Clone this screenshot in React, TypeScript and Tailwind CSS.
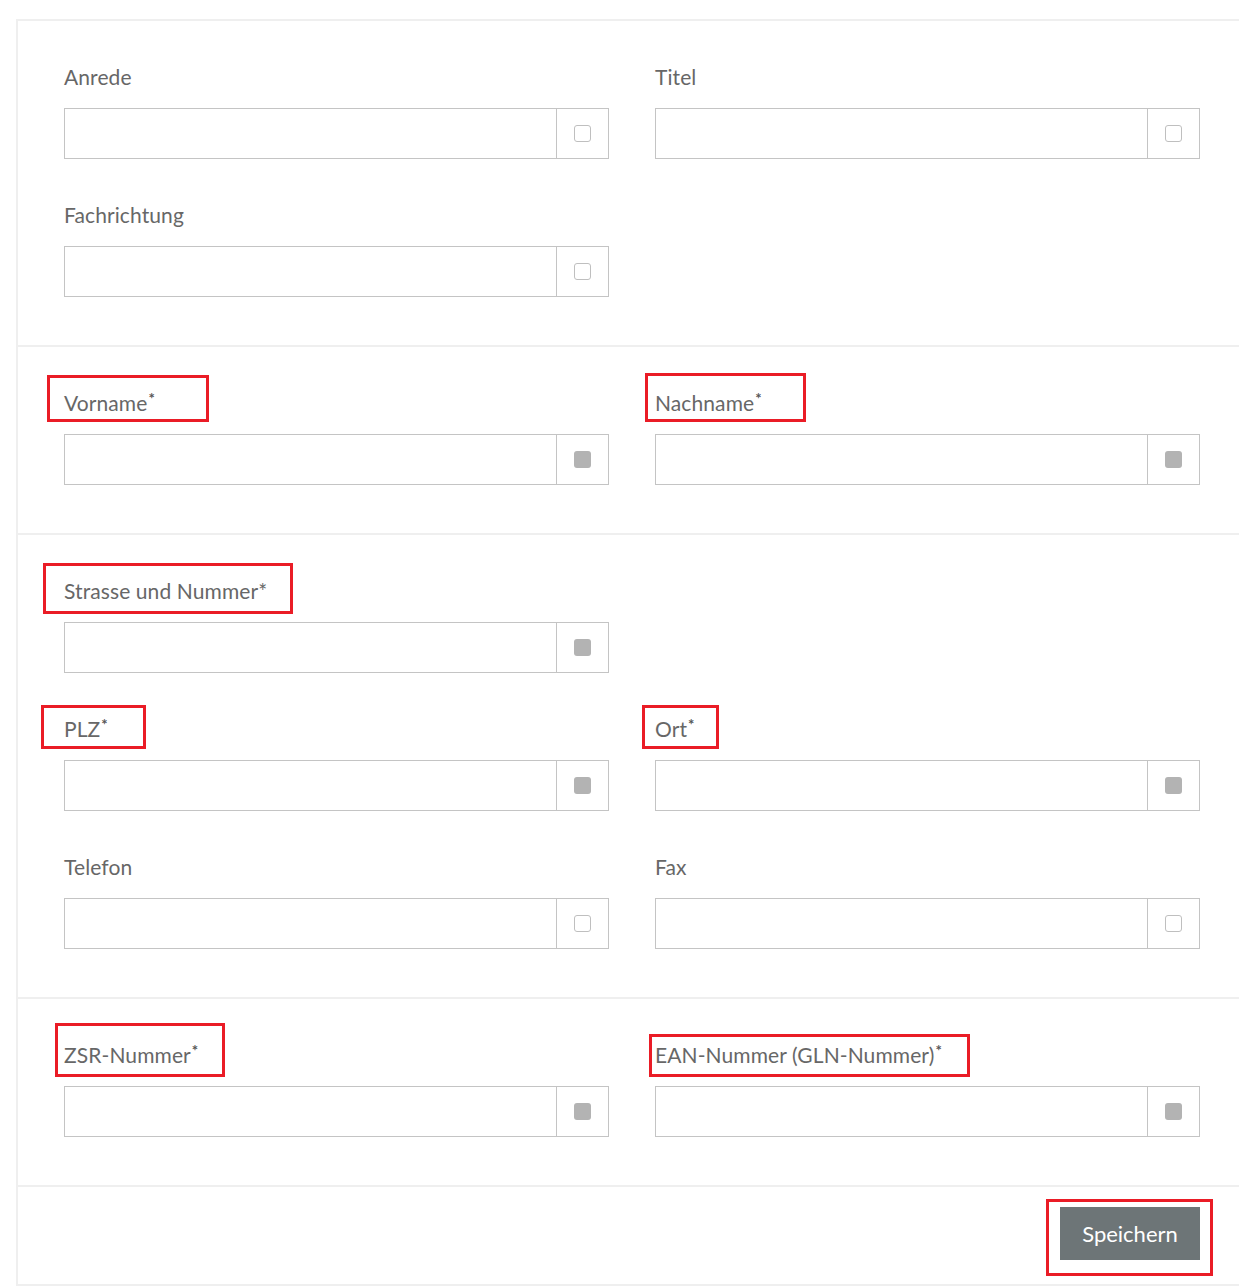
import React from "react";

type Mark = { l: number; t: number; w: number; h: number };

type Field = {
  label: string;
  star?: "sup" | "inline";
  filled?: boolean;
  mark?: Mark;
};

type Section = (Field | null)[];

const SECTIONS: Section[] = [
  [{ label: "Anrede" }, { label: "Titel" }, { label: "Fachrichtung" }, null],
  [
    { label: "Vorname", star: "sup", filled: true, mark: { l: -17, t: -14, w: 162, h: 47 } },
    { label: "Nachname", star: "sup", filled: true, mark: { l: -10, t: -16, w: 161, h: 49 } },
  ],
  [
    { label: "Strasse und Nummer", star: "inline", filled: true, mark: { l: -21, t: -14, w: 250, h: 51 } },
    null,
    { label: "PLZ", star: "sup", filled: true, mark: { l: -23, t: -10, w: 105, h: 44 } },
    { label: "Ort", star: "sup", filled: true, mark: { l: -13, t: -10, w: 77, h: 44 } },
    { label: "Telefon" },
    { label: "Fax" },
  ],
  [
    { label: "ZSR-Nummer", star: "sup", filled: true, mark: { l: -9, t: -18, w: 170, h: 54 } },
    { label: "EAN-Nummer (GLN-Nummer)", star: "sup", filled: true, mark: { l: -6, t: -7, w: 321, h: 43 } },
  ],
];

function RedMark({ mark }: { mark: Mark }) {
  return (
    <div
      className="absolute border-[3px] border-[#ea1c26] pointer-events-none"
      style={{ left: mark.l, top: mark.t, width: mark.w, height: mark.h }}
    />
  );
}

function FormField({ field }: { field: Field }) {
  return (
    <div className="relative">
      {field.mark && <RedMark mark={field.mark} />}
      <label className="block h-[24px] leading-[28px] text-[21px] text-[#676767] tracking-[0.1px]">
        {field.label}
        {field.star === "sup" && (
          <sup className="text-[15px] font-bold text-[#555] relative -top-[7px] ml-[1px]">*</sup>
        )}
        {field.star === "inline" && "*"}
      </label>
      <div className="mt-[21px] flex h-[51px] border border-[#c4c4c4] bg-white">
        <input className="flex-1 min-w-0 outline-none px-3" />
        <div className="w-[52px] border-l border-[#c4c4c4] flex items-center justify-center">
          {field.filled ? (
            <span className="block w-[17px] h-[17px] rounded-[3px] bg-[#b3b3b3]" />
          ) : (
            <span className="block w-[17px] h-[17px] rounded-[3px] border-[1.5px] border-[#bfbfbf]" />
          )}
        </div>
      </div>
    </div>
  );
}

export default function App() {
  return (
    <div
      className="w-[1239px] overflow-hidden bg-white pt-[19px]"
      style={{ fontFamily: "Lato, 'Open Sans', sans-serif" }}
    >
      <div className="ml-4 border-l-2 border-t-2 border-[#efefef]">
        {SECTIONS.map((section, i) => (
          <div key={i} className="border-b-2 border-[#efefef] pl-[46px] pr-[39px] pt-[42px] pb-[48px]">
            <div className="grid grid-cols-[545px_545px] gap-x-[46px] gap-y-[42px]">
              {section.map((field, j) =>
                field ? <FormField key={j} field={field} /> : <div key={j} />
              )}
            </div>
          </div>
        ))}
        <div className="border-b-2 border-[#efefef] pl-[46px] pr-[39px] pt-[20px] pb-[24px] flex justify-end">
          <div className="relative">
            <RedMark mark={{ l: -14, t: -8, w: 167, h: 77 }} />
            <button className="w-[140px] h-[53px] bg-[#6d7577] text-white text-[22px] cursor-pointer">
              Speichern
            </button>
          </div>
        </div>
      </div>
    </div>
  );
}
